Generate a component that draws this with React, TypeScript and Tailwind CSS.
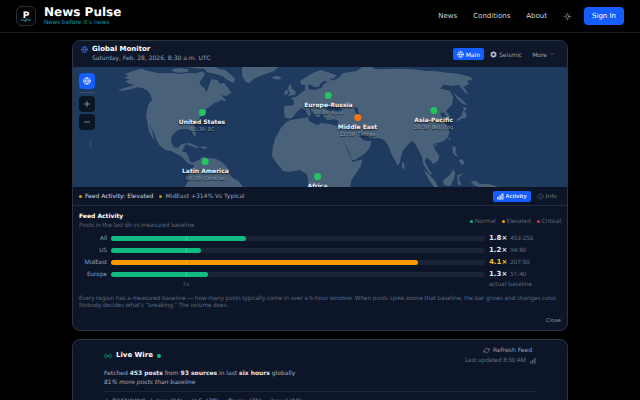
// ── News Pulse home page ──────────────────────────────────────────────────────
// Header, Global Monitor card (world map + feed activity) and the Live Wire card.

import type { ReactNode } from "react";
import { Globe } from "lucide-react";
import {
  HiOutlineArrowPath,
  HiOutlineChevronDown,
  HiOutlineInformationCircle,
  HiOutlineMinus,
  HiOutlinePlus,
  HiOutlineSun,
} from "react-icons/hi2";

// ── Data ──────────────────────────────────────────────────────────────────────

interface Region {
  name: string;
  clock?: string;
  left: number; // percent of the map width
  top: number; // percent of the map height
  elevated?: boolean;
}

const REGIONS: Region[] = [
  { name: "United States", clock: "03:30 DC", left: 26.1, top: 38 },
  { name: "Latin America", clock: "04:30 Caracas", left: 26.8, top: 79 },
  { name: "Europe-Russia", clock: "10:30 Kyiv", left: 51.7, top: 24 },
  { name: "Middle East", clock: "11:30 Tehran", left: 57.6, top: 42.5, elevated: true },
  { name: "Asia-Pacific", clock: "16:30 Beijing", left: 73, top: 37 },
  { name: "Africa", left: 49.5, top: 92 },
];

interface Feed {
  label: string;
  ratio: string;
  actual: number;
  baseline: number;
  fill: number; // percent of the track
  elevated?: boolean;
}

const FEEDS: Feed[] = [
  { label: "All", ratio: "1.8×", actual: 453, baseline: 250, fill: 36 },
  { label: "US", ratio: "1.2×", actual: 94, baseline: 80, fill: 24 },
  { label: "MidEast", ratio: "4.1×", actual: 207, baseline: 50, fill: 82, elevated: true },
  { label: "Europe", ratio: "1.3×", actual: 51, baseline: 40, fill: 26 },
];

// ── Icons ─────────────────────────────────────────────────────────────────────

function SignalIcon({ className }: { className: string }) {
  return (
    <svg viewBox="0 0 16 16" fill="currentColor" fillOpacity="0.5" stroke="currentColor" className={className}>
      <rect x="1.5" y="10" width="2.5" height="4.5" />
      <rect x="6" y="6.5" width="3" height="8" />
      <rect x="11" y="2" width="3" height="12.5" />
    </svg>
  );
}

function SeismicIcon({ className }: { className: string }) {
  return (
    <svg viewBox="0 0 16 16" className={className}>
      <path
        fill="currentColor"
        fillRule="evenodd"
        d="M8 0.5 14.5 4v8L8 15.5 1.5 12V4ZM8 5.2a2.8 2.8 0 1 0 0 5.6 2.8 2.8 0 0 0 0-5.6Z"
      />
    </svg>
  );
}

function BroadcastIcon({ className }: { className: string }) {
  return (
    <svg viewBox="0 0 24 24" fill="none" stroke="currentColor" strokeWidth="1.5" strokeLinecap="round" className={className}>
      <circle cx="12" cy="12" r="1.5" fill="currentColor" />
      <path d="M7.8 16.2a6 6 0 0 1 0-8.4M4.5 19.5a10.6 10.6 0 0 1 0-15M16.2 7.8a6 6 0 0 1 0 8.4M19.5 4.5a10.6 10.6 0 0 1 0 15" />
    </svg>
  );
}

function Logo() {
  return (
    <div className="relative flex size-5 items-center justify-center rounded-md border border-[#27303a] bg-[#020608]">
      <span className="text-[9px] leading-none font-bold text-white">P</span>
      <svg viewBox="0 0 20 20" fill="none" className="absolute inset-0">
        <path d="M4 14.5H8.5L9.5 16.5 10.5 13 11.5 14.5H15.5" stroke="#2ba8b0" strokeWidth="0.9" />
      </svg>
    </div>
  );
}

// ── Header ────────────────────────────────────────────────────────────────────

function Header() {
  return (
    <header className="flex h-[33px] items-center justify-between border-b border-[#1b1d22] bg-black px-4">
      <a href="#" className="flex items-center gap-2">
        <Logo />
        <div>
          <h1 className="text-xs leading-[13px] font-bold text-white">News Pulse</h1>
          <p className="text-[6px] leading-[8px] text-[#0d9aa0]">News before it's news</p>
        </div>
      </a>
      <nav className="flex items-center gap-4 text-[7px] text-[#d1d5db]">
        <a href="#news">News</a>
        <a href="#conditions">Conditions</a>
        <a href="#about">About</a>
        <div className="flex items-center gap-3">
          <button type="button" aria-label="Toggle theme" className="text-[#b6bac2]">
            <HiOutlineSun className="size-[9px]" />
          </button>
          <button type="button" className="h-[18px] rounded bg-[#155dfc] px-2 text-white">
            Sign In
          </button>
        </div>
      </nav>
    </header>
  );
}

// ── World map ─────────────────────────────────────────────────────────────────

function WorldMap() {
  return (
    <svg viewBox="3 9 1482 360" preserveAspectRatio="xMidYMid slice" className="absolute inset-0 size-full" fill="#4a6279">
      {/* Americas */}
      <path d="M138 78 165 70 185 64 190 62 172 60 160 52 174 46 156 42 168 36 160 30 184 20 208 14 232 22 262 28 300 27 322 30 345 27 372 28 392 22 400 30 390 44 382 56 388 66 398 72 402 84 408 74 412 60 418 46 436 48 444 60 456 56 470 74 478 86 462 96 448 94 458 104 462 112 446 108 440 114 428 116 416 126 404 134 398 146 388 156 378 168 368 180 366 192 372 206 370 218 364 212 356 198 342 194 326 196 316 200 304 210 298 222 298 238 306 250 318 252 328 240 342 238 334 256 330 262 344 266 350 280 352 290 362 296 372 292 384 286 392 278 406 282 430 284 446 292 460 304 470 316 472 330 480 340 500 352 513 369H340L350 346 348 330 362 314 366 302 352 300 340 290 330 278 314 270 300 262 280 258 262 244 254 228 246 208 238 190 230 176 240 198 244 216 248 228 240 220 232 204 228 188 226 170 222 160 224 140 230 120 240 108 236 92 226 80 212 72 196 70 176 76 150 80Z" />
      <path d="M396 14 430 12 460 18 478 34 490 44 484 56 470 50 450 36 430 30 404 24ZM300 16 326 12 350 16 348 24 318 26 302 22ZM344 9H442L430 12 396 14 366 13ZM340 240 352 236 368 244 382 250 376 252 356 246ZM384 249 396 247 408 252 396 255Z" />
      <path d="M510 9V36L522 54 532 58 546 44 574 32 604 22 620 9ZM599 40 612 36 628 40 624 46 608 46Z" />
      {/* British Isles */}
      <path d="M650 66 656 60 660 74 672 84 668 92 648 96 654 86 648 78ZM638 80 648 78 647 90 637 92Z" />
      {/* Eurasia */}
      <path
        fillRule="evenodd"
        d="M638 126 664 124 666 110 656 102 674 98 688 86 700 78 698 66 708 62 710 76 728 78 748 72 754 62 766 54 758 50 744 60 742 68 728 70 716 62 704 64 688 62 684 52 700 40 724 26 748 18 772 26 794 34 784 44 770 42 784 50 804 38 810 28 834 24 856 20 870 9H900L910 16 984 14 1024 16 1054 20 1094 22 1124 26 1164 30 1198 40 1200 48 1184 50 1192 60 1174 68 1190 90 1180 86 1160 62 1144 66 1114 62 1104 74 1134 80 1144 100 1140 122 1128 134 1122 142 1134 158 1128 162 1116 146 1104 146 1110 158 1116 172 1128 190 1132 204 1128 220 1114 232 1096 238 1084 240 1088 256 1102 276 1098 290 1084 300 1076 290 1064 280 1058 290 1068 312 1080 330 1076 332 1062 316 1054 300 1050 280 1040 258 1028 238 1020 230 1010 240 994 258 988 276 982 300 976 304 970 292 958 270 948 242 936 228 922 222 896 222 880 212 856 204 870 226 884 232 898 230 894 250 880 268 849 288 840 288 830 262 814 232 804 208 796 190 800 170 789 166 766 168 756 158 748 146 742 160 730 156 724 146 710 132 718 150 710 158 700 138 688 132 674 144 664 158 654 164 638 160 636 144ZM760 138 772 124 784 128 796 124 812 140 800 144 778 142ZM846 128 858 132 858 144 866 154 856 156 850 144Z"
      />
      {/* Africa */}
      <path d="M654 168 680 164 708 160 712 172 736 184 748 176 772 180 796 186 800 200 812 226 824 254 838 284 842 294 872 286 866 308 848 334 838 350 834 369H710L708 344 704 330 684 318 654 324 634 322 614 298 600 276 602 250 610 222 628 190 644 174Z" />
      {/* Sri Lanka, Japan, Sakhalin and the archipelagos */}
      <path d="M991 292 998 304 996 318 990 310ZM1142 82 1152 92 1166 104 1180 116 1184 124 1170 118 1156 104ZM1172 128 1186 132 1178 142ZM1174 138 1184 150 1182 162 1168 164 1156 172 1154 166 1168 156ZM1130 218 1136 222 1132 232ZM1088 240 1096 242 1092 248ZM1142 246 1152 250 1150 266 1158 276 1150 276 1142 264ZM1160 288 1172 286 1178 300 1168 302ZM1054 318 1070 330 1090 352 1098 369H1086L1070 346ZM1112 350 1134 332 1144 316 1150 328 1144 348 1136 366 1118 364ZM1156 334 1176 328 1160 340 1168 362 1158 364ZM1196 352 1212 350 1224 360 1250 360 1280 369H1220L1204 362Z" />
      <path d="M54 232 58 240 54 248" fill="none" stroke="#4a6279" strokeWidth="2" />
    </svg>
  );
}

function RegionPin({ region }: { region: Region }) {
  return (
    <button
      type="button"
      className="absolute flex -translate-x-1/2 flex-col items-center whitespace-nowrap"
      style={{ left: `${region.left}%`, top: `calc(${region.top}% - 4px)` }}
    >
      <span className={region.elevated ? "size-[7px] rounded-full bg-[#f97316]" : "size-[7px] rounded-full bg-[#22c55e]"} />
      <span className="mt-0.5 text-[6px] leading-[8px] font-bold text-[#f1f5f9] text-shadow-[0_1px_2px_#000]">{region.name}</span>
      {region.clock && (
        <span className="font-['DejaVu_Sans_Mono'] text-[5px] leading-[7px] text-[#94a3b8] text-shadow-[0_1px_1px_#000]">
          {region.clock}
        </span>
      )}
    </button>
  );
}

function MapControls() {
  return (
    <div className="absolute top-[6px] left-[6px] flex flex-col gap-0.5 text-white">
      <button type="button" aria-label="World view" className="flex size-4 items-center justify-center rounded bg-[#155dfc]">
        <Globe className="size-2" />
      </button>
      <div className="my-px h-px bg-[#3b4f6a]" />
      <button type="button" aria-label="Zoom in" className="flex size-4 items-center justify-center rounded bg-[#0b1524]">
        <HiOutlinePlus className="size-2" />
      </button>
      <button type="button" aria-label="Zoom out" className="flex size-4 items-center justify-center rounded bg-[#0b1524]">
        <HiOutlineMinus className="size-2" />
      </button>
    </div>
  );
}

// ── Global Monitor ────────────────────────────────────────────────────────────

function LegendItem({ dot, children }: { dot: string; children: ReactNode }) {
  return (
    <li className="flex items-center gap-0.5">
      <span className={`size-[3px] rounded-full ${dot}`} />
      {children}
    </li>
  );
}

function FeedRow({ feed }: { feed: Feed }) {
  return (
    <div className="flex h-3 items-center gap-1">
      <div className="w-7 text-right text-[6px] text-[#94a3b8]">{feed.label}</div>
      <div className="relative h-[5px] flex-1 rounded-full bg-[#1a2436]">
        <div
          className={feed.elevated ? "h-full rounded-full bg-[#fe9a00]" : "h-full rounded-full bg-[#0fba83]"}
          style={{ width: `${feed.fill}%` }}
        />
        <div className="absolute inset-y-0 left-1/5 w-px bg-white/20" />
      </div>
      <div className="flex w-[72px] items-center gap-[3px] leading-[8px]">
        <span
          className={
            feed.elevated
              ? "font-['DejaVu_Sans'] text-[7px] font-bold text-[#fbbf24]"
              : "font-['DejaVu_Sans'] text-[7px] font-bold text-[#e2e8f0]"
          }
        >
          {feed.ratio}
        </span>
        <span className="text-[6px] text-[#64748b]">
          {feed.actual}
          <span className="text-[#334155]">/</span>
          {feed.baseline}
        </span>
      </div>
    </div>
  );
}

function GlobalMonitor() {
  return (
    <section className="overflow-hidden rounded-lg border border-[#2b3443] bg-[#0d1628]">
      <div className="flex h-[26px] items-center justify-between bg-[#0f172a] px-2">
        <div className="flex gap-1">
          <Globe className="mt-px size-[7px] text-[#3b82f6]" />
          <div>
            <h2 className="text-[7px] leading-[9px] font-bold text-white">Global Monitor</h2>
            <p className="text-[6px] leading-[9px] text-[#94a3b8]">Saturday, Feb. 28, 2026, 8:30 a.m. UTC</p>
          </div>
        </div>
        <div className="flex text-[6px] text-[#94a3b8]">
          <button type="button" className="flex h-3 items-center gap-0.5 rounded-xs bg-[#155dfc] px-1 font-medium text-white">
            <Globe className="size-[7px]" />
            Main
          </button>
          <button type="button" className="flex h-3 items-center gap-0.5 px-1.5">
            <SeismicIcon className="size-[7px] text-[#b4bdca]" />
            Seismic
          </button>
          <button type="button" className="flex h-3 items-center gap-0.5 px-1">
            More
            <HiOutlineChevronDown className="size-[6px]" />
          </button>
        </div>
      </div>

      <div className="relative h-[120px] overflow-hidden bg-[#1e3a5f]">
        <WorldMap />
        {REGIONS.map((region) => (
          <RegionPin key={region.name} region={region} />
        ))}
        <MapControls />
      </div>

      <div className="flex h-[19px] items-center justify-between border-b border-[#222c3e] px-1.5 text-[6px]">
        <div className="flex items-center gap-1.5">
          <span className="flex items-center gap-[3px] text-[#d5dbe4]">
            <span className="size-[3px] rounded-full bg-[#d0a010]" />
            Feed Activity: Elevated
          </span>
          <span className="flex items-center gap-[3px] text-[#94a3b8]">
            <span className="size-[3px] rounded-full bg-[#b8900f]" />
            MidEast +314% Vs Typical
          </span>
        </div>
        <div className="flex gap-0.5 font-['Noto_Sans'] text-[#64748b]">
          <button type="button" className="flex h-[11px] items-center gap-0.5 rounded-xs bg-[#155dfc] px-1 font-medium text-white">
            <SignalIcon className="size-[7px]" />
            Activity
          </button>
          <button type="button" className="flex h-[11px] items-center gap-0.5 px-1">
            <HiOutlineInformationCircle className="size-[7px]" />
            Info
          </button>
        </div>
      </div>

      <div className="px-1.5 py-1.5 font-['Noto_Sans'] text-[6px] text-[#5c6a80]">
        <div className="flex items-center justify-between">
          <div>
            <h3 className="font-['DejaVu_Sans'] leading-[9px] font-bold text-white">Feed Activity</h3>
            <p className="leading-[9px]">Posts in the last 6h vs measured baseline</p>
          </div>
          <ul className="flex gap-1.5">
            <LegendItem dot="bg-[#10b981]">Normal</LegendItem>
            <LegendItem dot="bg-[#f0a020]">Elevated</LegendItem>
            <LegendItem dot="bg-[#dc2f45]">Critical</LegendItem>
          </ul>
        </div>
        <div className="mt-0.5">
          {FEEDS.map((feed) => (
            <FeedRow key={feed.label} feed={feed} />
          ))}
          <div className="flex items-center gap-1 leading-[8px]">
            <div className="w-7" />
            <div className="flex-1">
              <div className="w-2/5 text-center">1x</div>
            </div>
            <div className="w-[72px]">
              actual<span className="text-[#334155]">/</span>baseline
            </div>
          </div>
        </div>
        <p className="mt-[7px] leading-[7px]">
          Every region has a measured baseline — how many posts typically come in over a 6-hour window. When posts spike above that
          baseline, the bar grows and changes color. Nobody decides what's "breaking." The volume does.
        </p>
        <div className="mt-[7px] flex justify-end">
          <button type="button" className="leading-[8px] text-[#7c899c]">
            Close
          </button>
        </div>
      </div>
    </section>
  );
}

// ── Live Wire ─────────────────────────────────────────────────────────────────

function LiveWire() {
  return (
    <section className="rounded-lg border border-[#2b3443] bg-[#0d1628] px-[31px] pt-[5px] pb-4 text-[6px]">
      <div className="flex items-center justify-between">
        <div className="flex items-center gap-1">
          <BroadcastIcon className="size-2 text-[#10b981]" />
          <h2 className="text-[7px] font-bold text-white">Live Wire</h2>
          <span className="size-1 rounded-full bg-[#10b981]" />
        </div>
        <div className="flex flex-col items-end">
          <button type="button" className="flex items-center gap-[3px] px-1 leading-[10px] text-[#94a3b8]">
            <HiOutlineArrowPath className="size-[7px]" />
            Refresh Feed
          </button>
          <p className="flex items-center gap-1 font-['Noto_Sans'] leading-[11px] text-[#64748b]">
            Last updated 8:30 AM
            <SignalIcon className="size-[6px]" />
          </p>
        </div>
      </div>
      <div className="mt-[3px] leading-[9px] text-[#a3afc0]">
        <p>
          Fetched <b className="text-[#e2e8f0]">453 posts</b> from <b className="text-[#e2e8f0]">93 sources</b> in last{" "}
          <b className="text-[#e2e8f0]">six hours</b> globally
        </p>
        <p className="italic">81% more posts than baseline</p>
      </div>
      <div className="mt-1 border-t border-[#1c273a] pt-[5px] leading-[9px] text-[#94a3b8]">
        <p className="flex gap-1">
          <span className="text-[#b8900f]">⚡</span>
          <span className="tracking-wider">TRENDING</span>
          <span>|</span>
          <span>Iran (94)</span>
          <span>·</span>
          <span>U.S. (38)</span>
          <span>·</span>
          <span>Trump (31)</span>
          <span>·</span>
          <span>Israel (19)</span>
        </p>
      </div>
    </section>
  );
}

// ── Page ──────────────────────────────────────────────────────────────────────

export default function App() {
  return (
    <div className="h-screen overflow-hidden bg-black font-['DejaVu_Sans',sans-serif] [text-rendering:geometricPrecision]">
      <Header />
      <main className="mx-auto flex w-full max-w-[496px] flex-col gap-2 pt-[7px]">
        <GlobalMonitor />
        <LiveWire />
      </main>
    </div>
  );
}
